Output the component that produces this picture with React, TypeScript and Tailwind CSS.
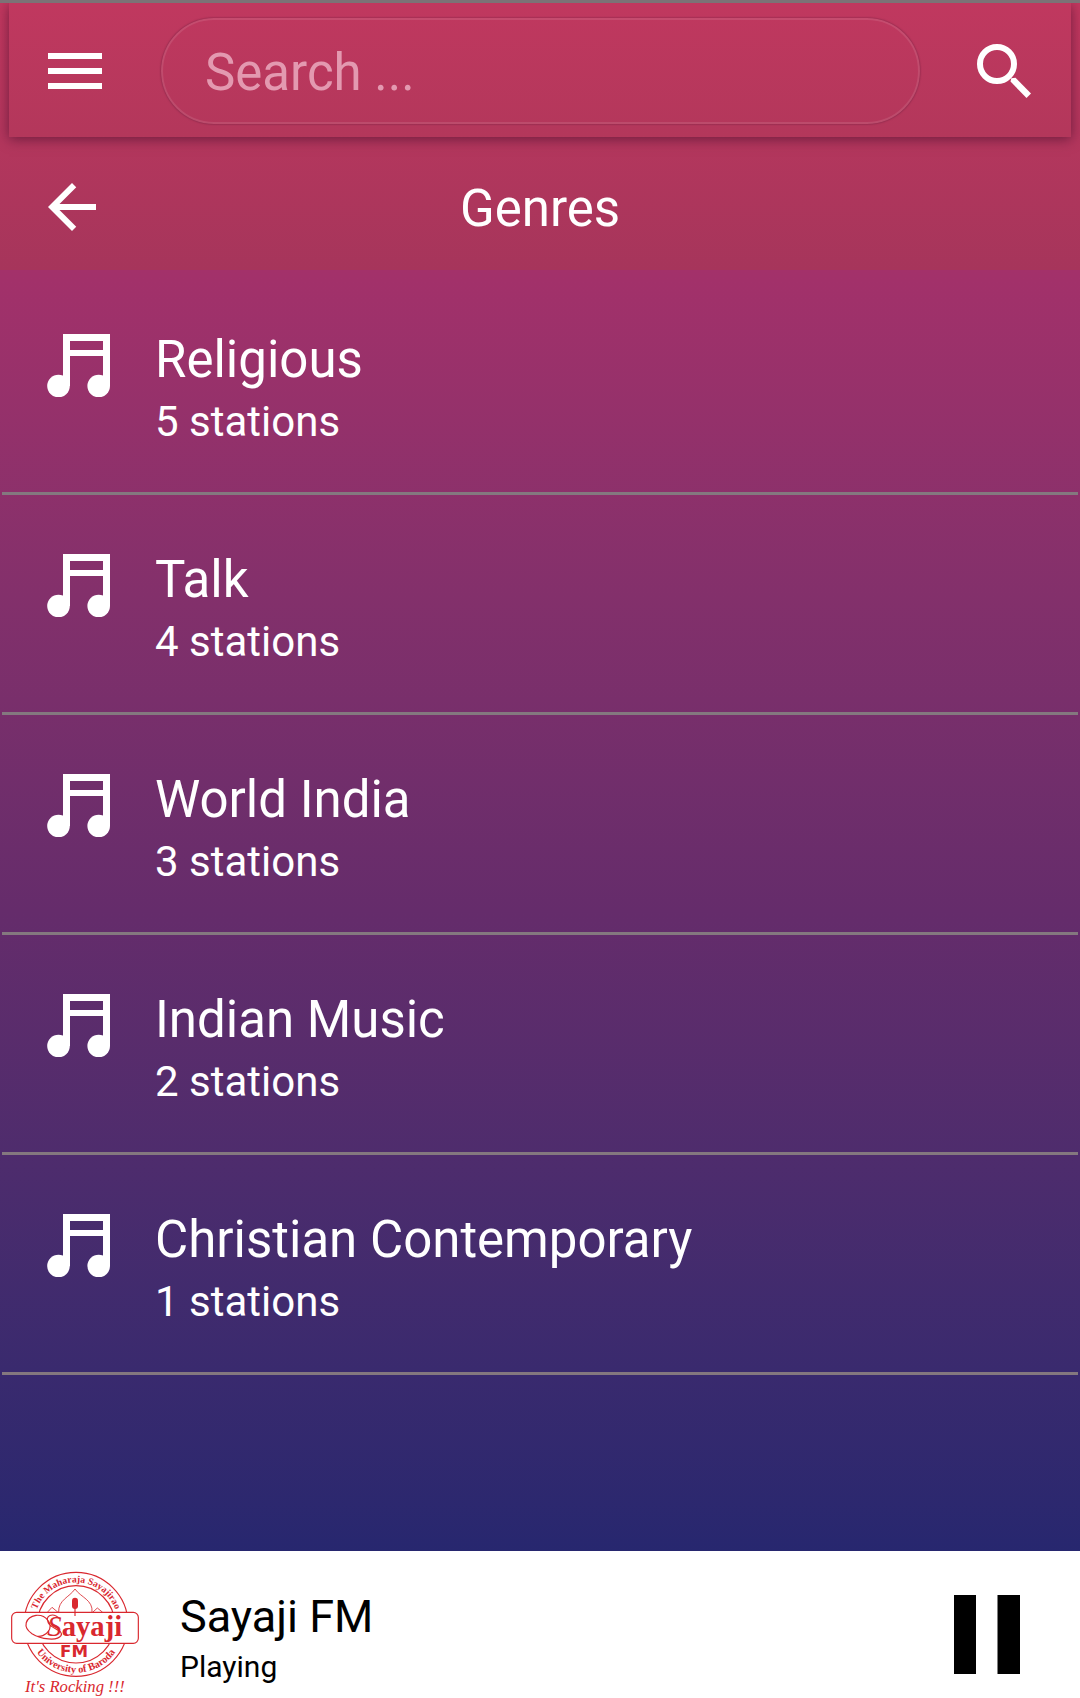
import { useState } from "react"
import { MdArrowBack, MdMenu } from "react-icons/md"

const genres = [
  { name: "Religious", stations: 5 },
  { name: "Talk", stations: 4 },
  { name: "World India", stations: 3 },
  { name: "Indian Music", stations: 2 },
  { name: "Christian Contemporary", stations: 1 },
]

function SearchIcon() {
  return (
    <svg viewBox="0 0 54 54" className="h-[54px] w-[54px]" aria-hidden="true">
      <circle cx="20" cy="20" r="17" fill="none" stroke="currentColor" strokeWidth="6" />
      <path d="M33.5 37.5 34.3 34.3 38.5 33.7 54 49.5 49.5 54Z" fill="currentColor" />
    </svg>
  )
}

function NotesIcon() {
  return (
    <svg viewBox="0 0 63 63" className="h-[63px] w-[63px] shrink-0" fill="currentColor" aria-hidden="true">
      <path d="M16 0H63V52H56V22H23V52H16ZM23 7V16H56V7Z" fillRule="evenodd" />
      <circle cx="11.5" cy="52" r="11.3" />
      <circle cx="51.7" cy="52" r="11.3" />
    </svg>
  )
}

function PauseIcon() {
  return (
    <svg viewBox="0 0 66 79" className="h-[79px] w-[66px]" fill="currentColor" aria-hidden="true">
      <path d="M0 0H22V79H0ZM43.5 0H66V79H43.5Z" />
    </svg>
  )
}

function StationLogo() {
  return (
    <svg viewBox="0 33 480 441" className="h-[147px] w-[160px] shrink-0" role="img" aria-label="Sayaji FM logo">
      <defs>
        <path id="ring-top" d="M102 253A126 126 0 0 1 354 253" />
        <path id="ring-bottom" d="M83 253A145 145 0 0 0 373 253" />
      </defs>
      <g fill="none" stroke="#d9282f" strokeWidth="3.5">
        <circle cx="228" cy="253" r="156" />
        <circle cx="228" cy="253" r="116" />
        <path
          d="M176 217C174 180 208 172 225 147C242 172 280 180 276 217M142 217L156 202L174 217M278 217L292 204L308 217"
          strokeWidth="2.5"
        />
      </g>
      <rect x="216" y="173" width="18" height="34" rx="9" fill="#d9282f" />
      <rect x="35" y="217" width="380" height="93" rx="15" fill="#fff" stroke="#d9282f" strokeWidth="3.5" />
      <path d="M225 205V228" stroke="#d9282f" strokeWidth="3.5" />
      <path
        d="M180 236C158 216 133 226 145 249C158 270 191 269 183 287C172 304 123 298 96 281C66 261 76 232 108 226C139 223 160 253 145 274C137 286 121 292 108 288"
        fill="none"
        stroke="#d9282f"
        strokeWidth="3.5"
      />
      <g fill="#d9282f" fontFamily="Liberation Serif, serif">
        <text fontSize="29" fontWeight="bold" textAnchor="middle">
          <textPath href="#ring-top" startOffset="50%">The Maharaja Sayajirao</textPath>
        </text>
        <text fontSize="31" fontWeight="bold" textAnchor="middle">
          <textPath href="#ring-bottom" startOffset="50%">University of Baroda</textPath>
        </text>
        <text x="142" y="287" fontSize="86">
          <tspan fontStyle="italic">S</tspan>
          <tspan fontWeight="bold">ayaji</tspan>
        </text>
        <text x="75" y="456" fontSize="50" fontStyle="italic">It's Rocking !!!</text>
      </g>
      <text x="180" y="352" fontSize="50" fontWeight="bold" fill="#d9282f" fontFamily="DejaVu Sans, sans-serif">
        FM
      </text>
    </svg>
  )
}

export default function App() {
  const [query, setQuery] = useState("")
  const [playing, setPlaying] = useState(true)

  return (
    <div className="flex min-h-screen flex-col bg-[#27276f] font-[Roboto,sans-serif] text-white">
      <div className="overflow-hidden border-t-3 border-[#7c7276] bg-linear-to-b from-[#c2385f] to-[#a6355b]">
        <header className="mx-[9px] grid h-[134px] grid-cols-[152px_1fr_151px] items-center bg-linear-to-b from-[#c0385f] to-[#b3375b] pt-0.5 shadow-[0_2px_12px_rgba(60,10,40,0.6)]">
          <button type="button" aria-label="Menu" className="ml-[30px] w-[72px]">
            <MdMenu className="h-[72px] w-[72px]" />
          </button>
          <input
            type="text"
            aria-label="Search"
            placeholder="Search ..."
            value={query}
            onChange={(e) => setQuery(e.target.value)}
            className="h-[106px] w-full min-w-0 rounded-full border-2 border-white/10 bg-transparent px-[42px] pt-0.5 text-[51px] text-white shadow-[0_0_2px_rgba(60,10,40,0.6)] outline-none placeholder:text-[#e399b0]"
          />
          <button type="button" aria-label="Search stations" className="ml-[57px] w-[54px]">
            <SearchIcon />
          </button>
        </header>
        <div className="grid h-[133px] grid-cols-[1fr_auto_1fr] items-center px-9 pt-1.5">
          <button type="button" aria-label="Back" className="w-[72px]">
            <MdArrowBack className="h-[72px] w-[72px]" />
          </button>
          <h1 className="pt-1 text-[51px] leading-[60px]">Genres</h1>
        </div>
      </div>

      <main className="grow bg-linear-to-b from-[#a3316a] via-[#652c6b] to-[#27276f] pt-[5px]">
        <ul>
          {genres.map((genre) => (
            <li key={genre.name} className="mx-0.5 border-b-3 border-[#84787f]">
              <a href="#" className="flex h-[217px] gap-[45px] pt-[59px] pl-[45px]">
                <NotesIcon />
                <div>
                  <h2 className="text-[51px] leading-[52px]">{genre.name}</h2>
                  <p className="mt-2 text-[42px] leading-[56px]">{genre.stations} stations</p>
                </div>
              </a>
            </li>
          ))}
        </ul>
      </main>

      <footer className="flex h-[147px] items-center bg-white text-black">
        <StationLogo />
        <div className="ml-5 grow pt-7">
          <p className="text-[45px] leading-[56px]">Sayaji FM</p>
          <p className="text-[30px] leading-[44px]">{playing ? "Playing" : "Paused"}</p>
        </div>
        <button
          type="button"
          aria-label={playing ? "Pause" : "Play"}
          onClick={() => setPlaying(!playing)}
          className="mr-15 pt-5"
        >
          <PauseIcon />
        </button>
      </footer>
    </div>
  )
}
